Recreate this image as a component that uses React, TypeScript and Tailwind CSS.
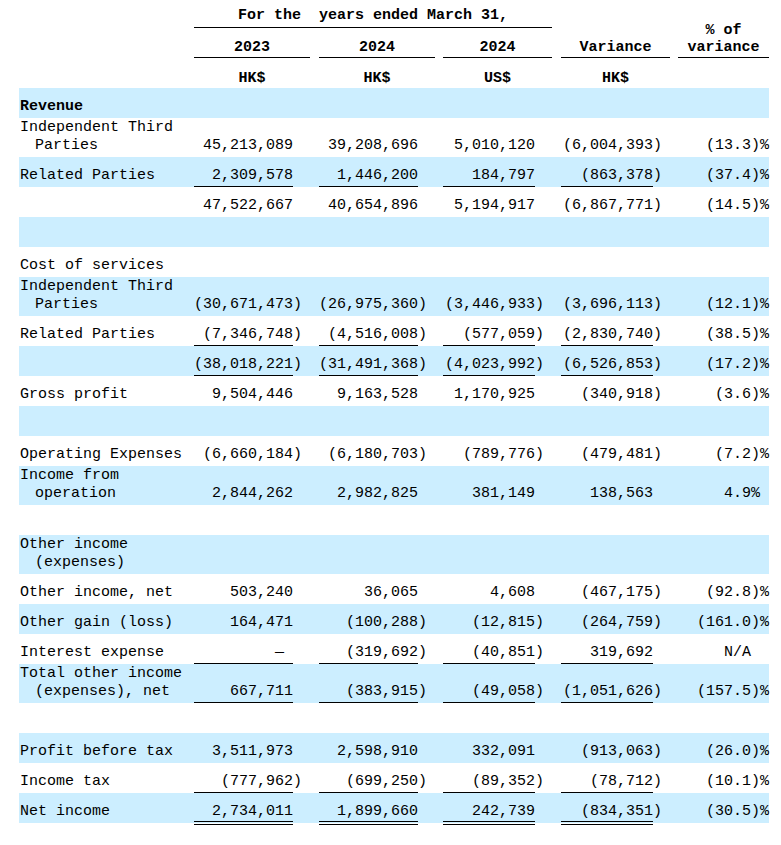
const FONT = "font-['Liberation_Mono',monospace]";

type Line = "none" | "single" | "double";

type Row = {
  label?: string[];
  vals?: string[];
  pct?: string;
  blue?: boolean;
  tall?: boolean;
  bold?: boolean;
  line?: Line;
};

const rows: Row[] = [
  { label: ["Revenue"], blue: true, bold: true },
  { label: ["Independent Third", "Parties"], tall: true, vals: ["45,213,089", "39,208,696", "5,010,120", "(6,004,393)"], pct: "(13.3)%" },
  { label: ["Related Parties"], blue: true, vals: ["2,309,578", "1,446,200", "184,797", "(863,378)"], pct: "(37.4)%", line: "single" },
  { vals: ["47,522,667", "40,654,896", "5,194,917", "(6,867,771)"], pct: "(14.5)%" },
  { blue: true },
  { label: ["Cost of services"] },
  { label: ["Independent Third", "Parties"], tall: true, blue: true, vals: ["(30,671,473)", "(26,975,360)", "(3,446,933)", "(3,696,113)"], pct: "(12.1)%" },
  { label: ["Related Parties"], vals: ["(7,346,748)", "(4,516,008)", "(577,059)", "(2,830,740)"], pct: "(38.5)%", line: "single" },
  { blue: true, vals: ["(38,018,221)", "(31,491,368)", "(4,023,992)", "(6,526,853)"], pct: "(17.2)%", line: "single" },
  { label: ["Gross profit"], vals: ["9,504,446", "9,163,528", "1,170,925", "(340,918)"], pct: "(3.6)%" },
  { blue: true },
  { label: ["Operating Expenses"], vals: ["(6,660,184)", "(6,180,703)", "(789,776)", "(479,481)"], pct: "(7.2)%" },
  { label: ["Income from", "operation"], tall: true, blue: true, vals: ["2,844,262", "2,982,825", "381,149", "138,563"], pct: "4.9%" },
  {},
  { label: ["Other income", "(expenses)"], tall: true, blue: true },
  { label: ["Other income, net"], vals: ["503,240", "36,065", "4,608", "(467,175)"], pct: "(92.8)%" },
  { label: ["Other gain (loss)"], blue: true, vals: ["164,471", "(100,288)", "(12,815)", "(264,759)"], pct: "(161.0)%" },
  { label: ["Interest expense"], vals: ["— ", "(319,692)", "(40,851)", "319,692"], pct: "N/A", line: "single" },
  { label: ["Total other income", "(expenses), net"], tall: true, blue: true, vals: ["667,711", "(383,915)", "(49,058)", "(1,051,626)"], pct: "(157.5)%", line: "single" },
  {},
  { label: ["Profit before tax"], blue: true, vals: ["3,511,973", "2,598,910", "332,091", "(913,063)"], pct: "(26.0)%" },
  { label: ["Income tax"], vals: ["(777,962)", "(699,250)", "(89,352)", "(78,712)"], pct: "(10.1)%", line: "single" },
  { label: ["Net income"], blue: true, vals: ["2,734,011", "1,899,660", "242,739", "(834,351)"], pct: "(30.5)%", line: "double" },
];

const valW = ["w-[99px]", "w-[99px]", "w-[92px]", "w-[92px]"];
const sufW = ["w-[26px]", "w-[25px]", "w-[26px]", "w-[25px]"];

function split(v: string) {
  if (v.endsWith(")%")) return [v.slice(0, -2), ")%"];
  if (v.endsWith("%")) return [v.slice(0, -1), "%"];
  if (v.endsWith(")")) return [v.slice(0, -1), ")"];
  return [v, ""];
}

const lineCls: Record<Line, string> = {
  none: "pb-[2px]",
  single: "border-b border-black pb-[1px]",
  double: "border-b-4 border-double border-black pb-0 -mb-[2px]",
};

function DataRow({ r }: { r: Row }) {
  const line = r.line ?? "none";
  return (
    <div className={`flex ${r.tall ? "h-[39px]" : "h-[30px]"} ${r.blue ? "bg-[#cceeff]" : "bg-white"}`}>
      <div className={`w-[175px] flex flex-col justify-end pb-[2px] pl-[1px] ${r.bold ? "font-bold" : ""}`}>
        {r.label?.map((l, i) => (
          <div key={i} className={`whitespace-pre ${i > 0 ? "pl-[15px]" : ""}`}>{l}</div>
        ))}
      </div>
      {[0, 1, 2, 3].map((i) => {
        const v = r.vals?.[i];
        const [main, suf] = v ? split(v) : ["", ""];
        return (
          <div key={i} className="flex">
            <div className={`${valW[i]} flex items-end justify-end whitespace-pre ${v ? lineCls[line] : "pb-[2px]"}`}>{main}</div>
            <div className={`${sufW[i]} flex items-end pb-[2px]`}>{suf}</div>
          </div>
        );
      })}
      {(() => {
        const [main, suf] = r.pct ? split(r.pct) : ["", ""];
        return (
          <div className="flex">
            <div className="w-[73px] flex items-end justify-end pb-[2px]">{main}</div>
            <div className="w-[18px] flex items-end pb-[2px] whitespace-pre">{suf}</div>
          </div>
        );
      })()}
    </div>
  );
}

export default function App() {
  return (
    <div className={`w-[781px] h-[845px] bg-white pl-[19px] text-black text-[15px] leading-[18px] ${FONT}`}>
      <div className="flex">
        <div className="w-[175px]" />
        <div className="flex flex-col w-[484px] font-bold">
          <div className="h-[28px] flex">
            <div className="w-[358px] border-b border-black text-center pt-[7px] whitespace-pre">For the  years ended March 31,</div>
          </div>
          <div className="h-[30px] flex">
            <div className="w-[116px] mr-[9px] border-b border-black flex items-end justify-center pb-0">2023</div>
            <div className="w-[116px] mr-[8px] border-b border-black flex items-end justify-center pb-0">2024</div>
            <div className="w-[109px] mr-[9px] border-b border-black flex items-end justify-center pb-0">2024</div>
            <div className="w-[109px] mr-[8px] border-b border-black flex items-end justify-center pb-0">Variance</div>
          </div>
          <div className="h-[30px] flex">
            <div className="w-[116px] mr-[9px] flex items-end justify-center pb-0">HK$</div>
            <div className="w-[116px] mr-[8px] flex items-end justify-center pb-0">HK$</div>
            <div className="w-[109px] mr-[9px] flex items-end justify-center pb-0">US$</div>
            <div className="w-[109px] mr-[8px] flex items-end justify-center pb-0">HK$</div>
          </div>
        </div>
        <div className="w-[91px] flex flex-col font-bold">
          <div className="h-[58px] border-b border-black flex flex-col justify-end items-center pb-[1px] leading-[17px]">
            <div>% of</div>
            <div>variance</div>
          </div>
        </div>
      </div>
      <div className="w-[750px]">
        {rows.map((r, i) => (
          <DataRow key={i} r={r} />
        ))}
      </div>
    </div>
  );
}
